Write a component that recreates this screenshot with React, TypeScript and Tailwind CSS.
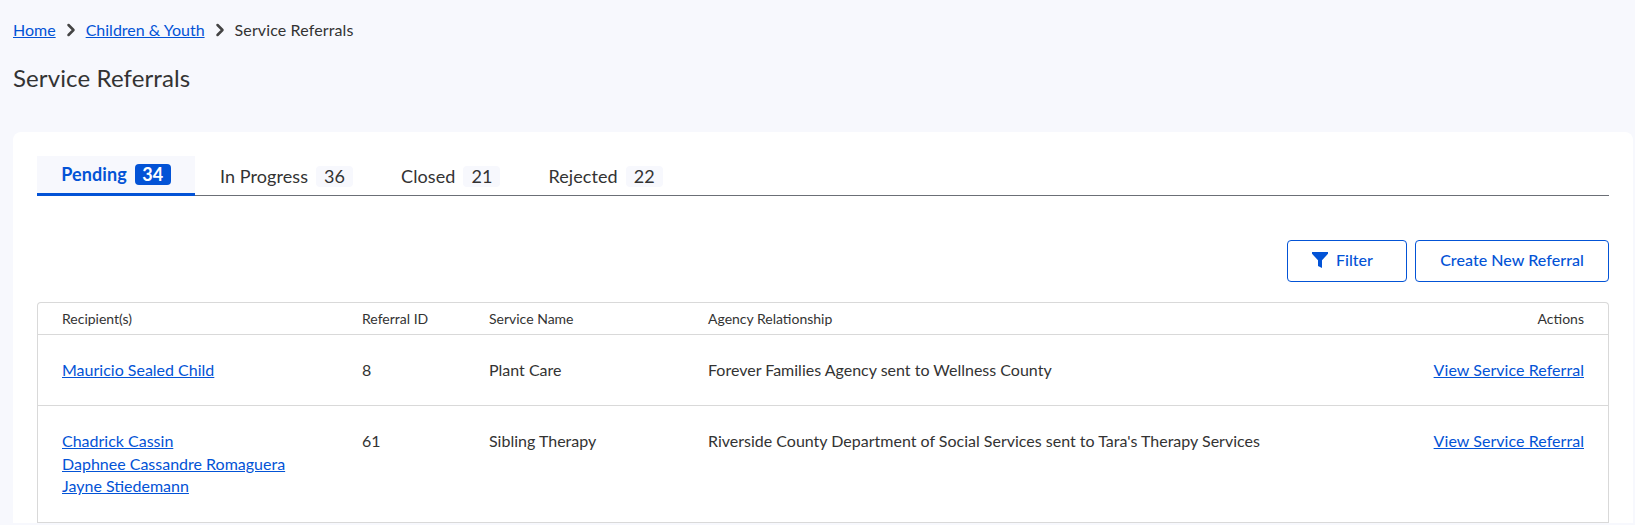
import { ChevronRight } from 'lucide-react';

const tabs = [
  { label: 'In Progress', count: 36 },
  { label: 'Closed', count: 21 },
  { label: 'Rejected', count: 22 },
];

const link = 'text-[#0353d6] underline';

const rows = [
  {
    recipients: ['Mauricio Sealed Child'],
    id: 8,
    service: 'Plant Care',
    agency: 'Forever Families Agency sent to Wellness County',
  },
  {
    recipients: ['Chadrick Cassin', 'Daphnee Cassandre Romaguera', 'Jayne Stiedemann'],
    id: 61,
    service: 'Sibling Therapy',
    agency: "Riverside County Department of Social Services sent to Tara's Therapy Services",
  },
];

export default function App() {
  return (
    <div className="h-[525px] overflow-hidden bg-[#f7f8fd] pl-[13px] pr-[2px] pt-[19px] font-['Lato',sans-serif] text-[#333333]">
      <nav className="flex h-[22px] items-center text-[16px] leading-[22px]">
        <a className={link} href="#">Home</a>
        <ChevronRight className="mx-[5px] h-5 w-5 text-[#444444]" strokeWidth={3} />
        <a className={link} href="#">Children &amp; Youth</a>
        <ChevronRight className="mx-[5px] h-5 w-5 text-[#444444]" strokeWidth={3} />
        <span className="tracking-[0.12px]">Service Referrals</span>
      </nav>
      <h1 className="mt-[21px] text-[24px] leading-[32px] tracking-[0.12px]">Service Referrals</h1>

      <div className="mt-[38px] rounded-t-lg bg-white px-6 pt-6">
        <div className="flex h-[40px] border-b border-[#6b6f76]">
          <div className="flex h-[40px] w-[158px] items-start justify-center gap-2 border-b-[3px] border-[#0353d6] bg-[#f7f8fd] pt-2">
            <span className="text-[18px] font-bold leading-[21px] tracking-[0.1px] text-[#0353d6]">Pending</span>
            <span className="flex h-[21px] w-[36px] items-center justify-center rounded bg-[#0353d6] text-[18px] font-bold leading-[21px] text-white">34</span>
          </div>
          <div className="ml-[1px] flex">
            {tabs.map((tab) => (
              <div key={tab.label} className="flex items-start gap-2 px-6 pt-[10px]">
                <span className="text-[18px] leading-[21px] tracking-[0.08px]">{tab.label}</span>
                <span className="flex h-[21px] w-[37px] items-center justify-center rounded bg-[#f7f8fd] text-[18px] leading-[21px]">{tab.count}</span>
              </div>
            ))}
          </div>
        </div>

        <div className="mt-[44px] flex justify-end gap-2">
          <button className="flex h-[42px] w-[120px] items-center gap-2 rounded border border-[#0353d6] pb-[2px] pl-6 text-[16px] font-medium text-[#0353d6]">
            <svg className="h-4 w-4" viewBox="0 0 16 16" fill="currentColor">
              <path d="M0 0h16v1.8L10 8.2V16L6 14V8.2L0 1.8z" />
            </svg>
            Filter
          </button>
          <button className="h-[42px] w-[194px] rounded border border-[#0353d6] pb-[2px] text-[16px] font-medium tracking-[0.05px] text-[#0353d6]">
            Create New Referral
          </button>
        </div>

        <div className="mt-[20px] rounded-t border border-b-0 border-[#d9d9d9]">
          <div className="flex h-[32px] items-center border-b border-[#d9d9d9] px-6 text-[14px]">
            <div className="w-[300px]">Recipient(s)</div>
            <div className="w-[127px]">Referral ID</div>
            <div className="w-[219px]">Service Name</div>
            <div className="flex-1">Agency Relationship</div>
            <div>Actions</div>
          </div>
          {rows.map((row) => (
            <div key={row.id} className="flex items-start border-b border-[#d9d9d9] px-6 py-6 text-[16px] leading-[1.4]">
              <div className="flex w-[300px] flex-col">
                {row.recipients.map((name) => (
                  <a key={name} className={link} href="#">{name}</a>
                ))}
              </div>
              <div className="w-[127px]">{row.id}</div>
              <div className="w-[219px]">{row.service}</div>
              <div className="flex-1">{row.agency}</div>
              <a className={`${link} tracking-[0.05px]`} href="#">View Service Referral</a>
            </div>
          ))}
        </div>
      </div>
    </div>
  );
}
